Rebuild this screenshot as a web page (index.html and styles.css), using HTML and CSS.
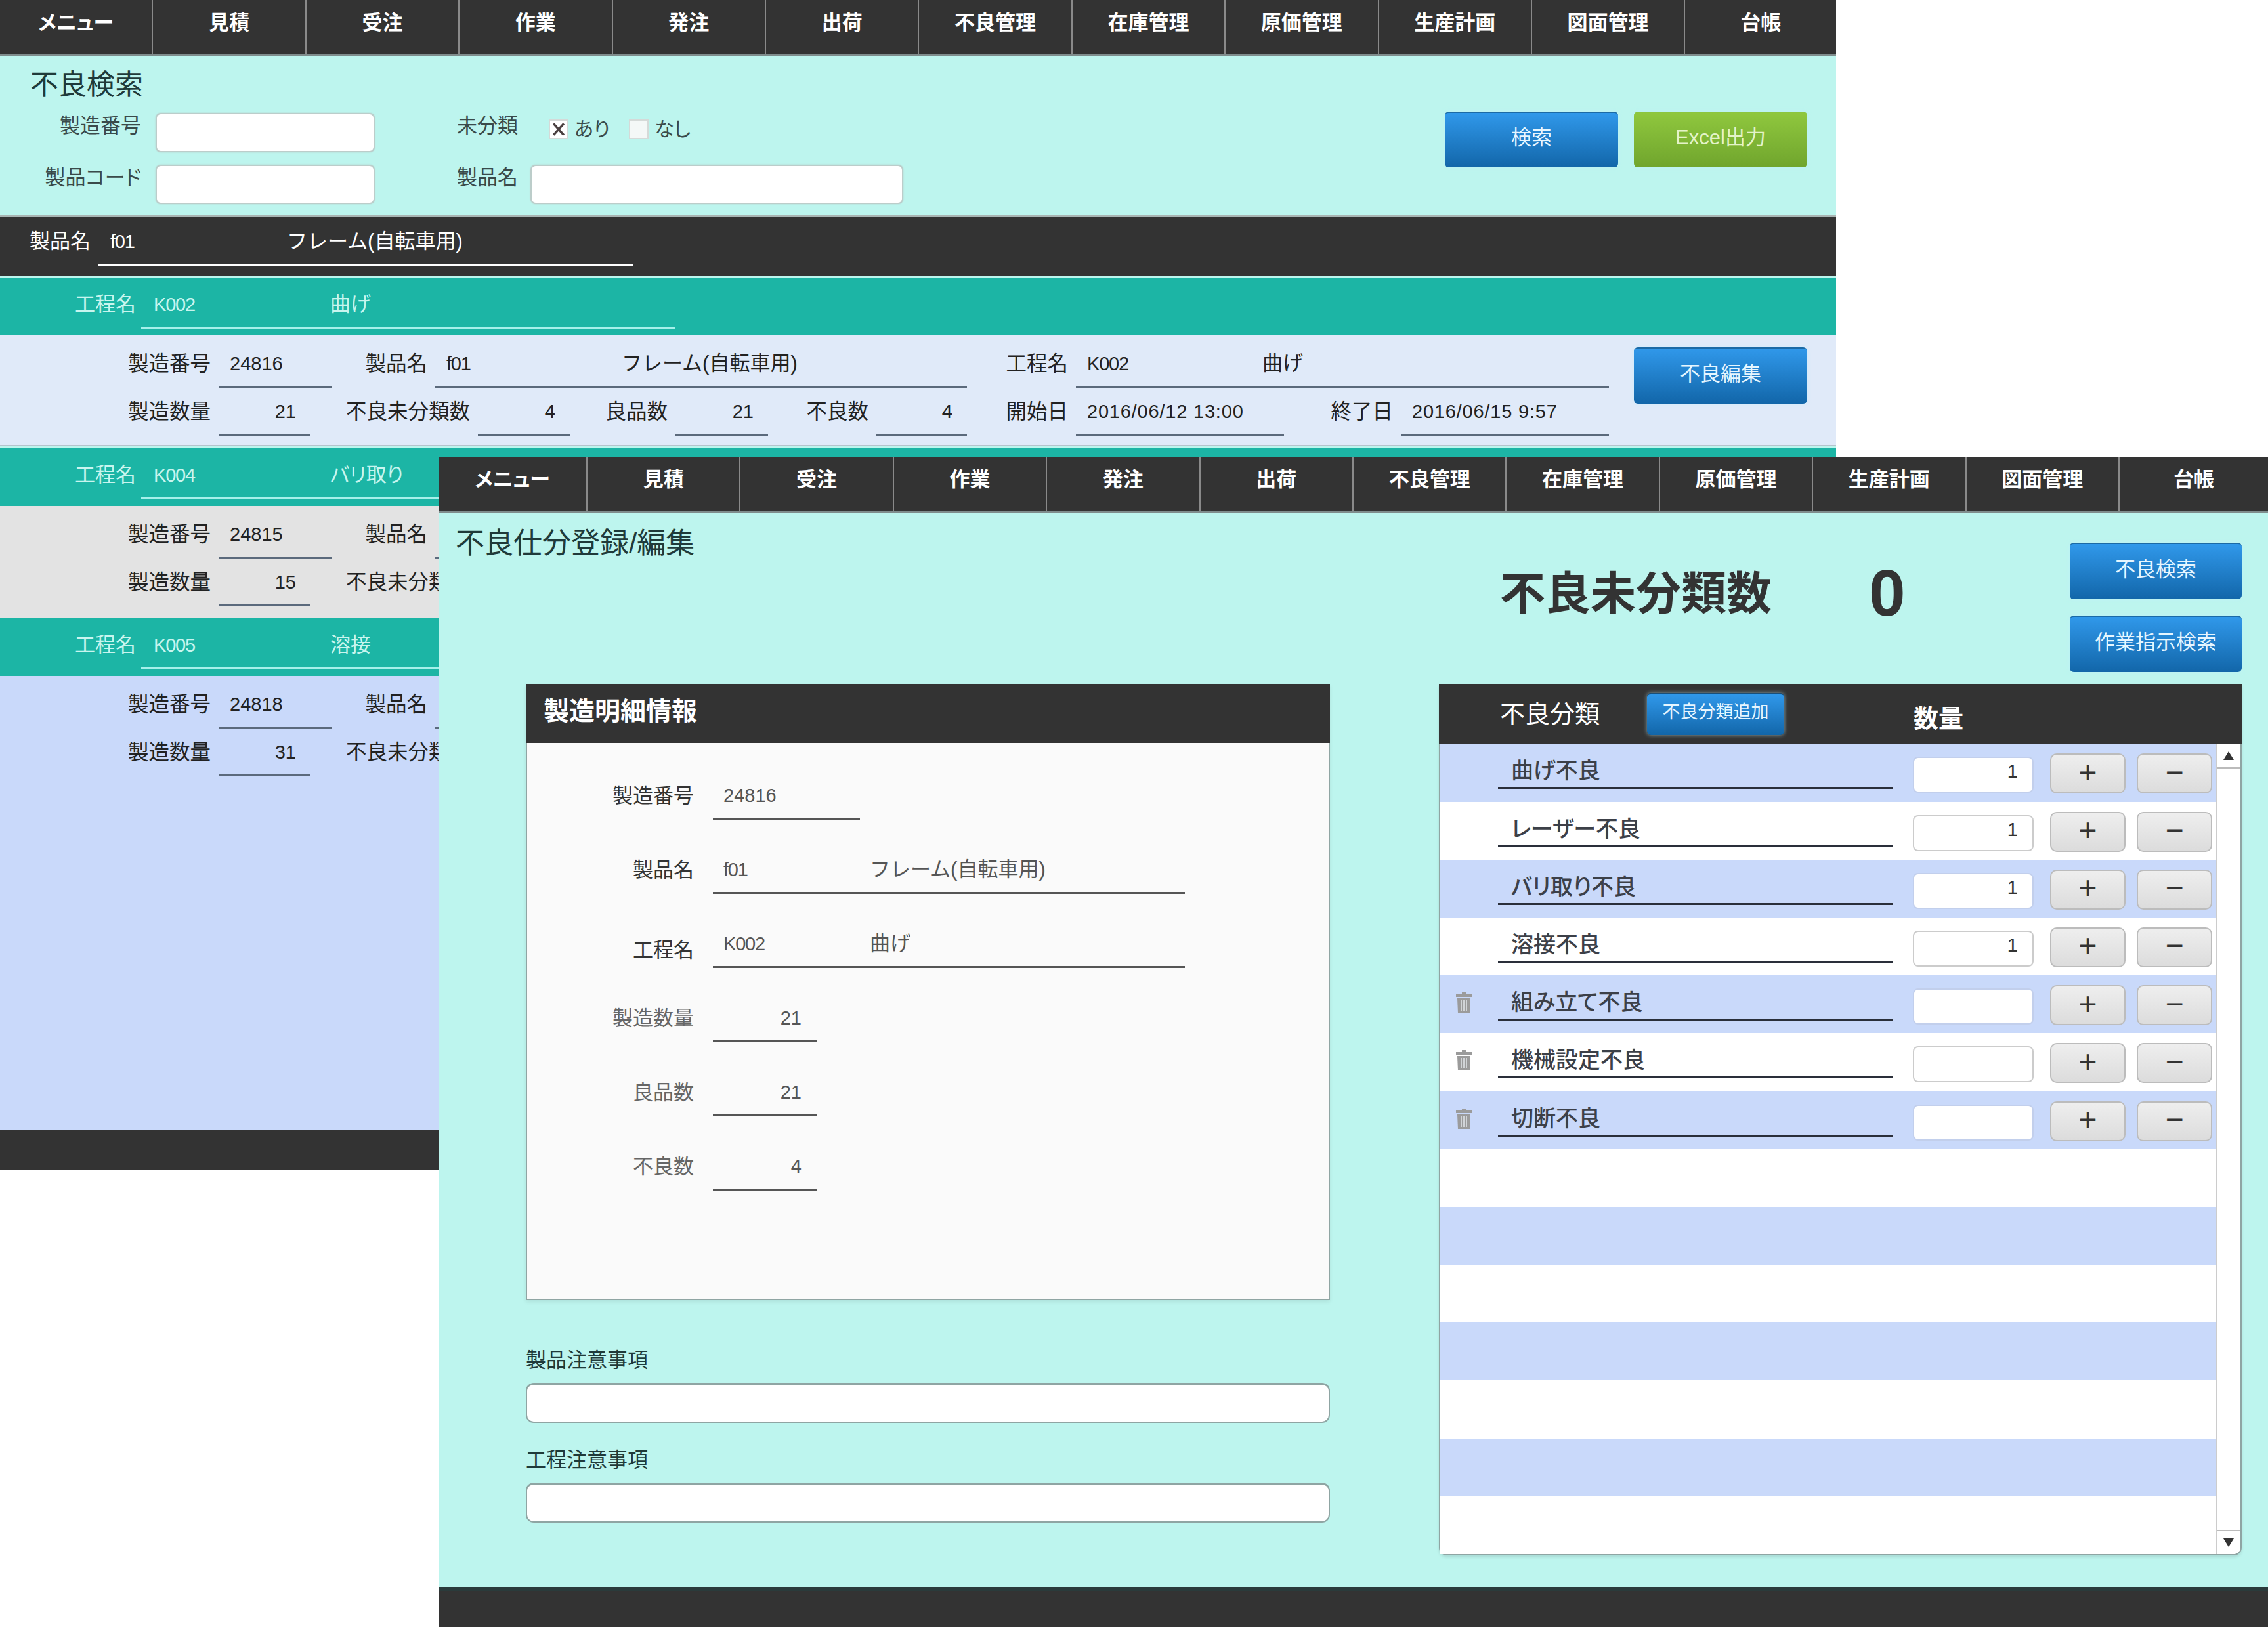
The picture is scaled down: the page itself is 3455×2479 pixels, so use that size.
FILE: index.html
```html
<!DOCTYPE html>
<html lang="ja">
<head>
  <meta charset="utf-8">
  <title>不良仕分登録/編集</title>
  <link rel="stylesheet" href="styles.css">
</head>
<body>
  <!-- 不良検索 window -->
  <section class="window window-back">
    <nav class="menu">
      <a>メニュー</a><a>見積</a><a>受注</a><a>作業</a><a>発注</a><a>出荷</a><a>不良管理</a><a>在庫管理</a><a>原価管理</a><a>生産計画</a><a>図面管理</a><a>台帳</a>
    </nav>

    <div class="search">
      <div class="search-left">
        <h1 class="page-title">不良検索</h1>
        <div class="search-form">
          <label class="search-label">製造番号</label>
          <input class="box" type="text">
          <label class="search-label search-label-2">未分類</label>
          <div class="checks">
            <span class="check"><svg viewBox="0 0 30 30" width="28" height="28"><path d="M6 5l18 20M24 5L6 25" stroke="#4a4040" stroke-width="4"/></svg></span>
            <span class="check-text">あり</span>
            <span class="check check-off"></span>
            <span class="check-text">なし</span>
          </div>
          <label class="search-label">製品コード</label>
          <input class="box" type="text">
          <label class="search-label search-label-2">製品名</label>
          <input class="box" type="text">
        </div>
      </div>
      <div class="search-buttons">
        <button class="btn btn-blue">検索</button>
        <button class="btn btn-green">Excel出力</button>
      </div>
    </div>

    <div class="product-bar">
      <span class="bar-label">製品名</span>
      <span class="bar-value"><span class="code">f01</span><span class="name name-wide">フレーム(自転車用)</span></span>
    </div>

    <div class="process-bar">
      <span class="bar-label">工程名</span>
      <span class="bar-value"><span class="code">K002</span><span class="name">曲げ</span></span>
    </div>
    <div class="detail detail-light">
      <div class="detail-lines">
        <div class="line line-1">
          <span class="lbl">製造番号</span><span class="val">24816</span>
          <span class="lbl">製品名</span><span class="val"><span class="code code-product">f01</span><span class="name name-wide">フレーム(自転車用)</span></span>
          <span class="lbl">工程名</span><span class="val"><span class="code code-product">K002</span><span class="name">曲げ</span></span>
        </div>
        <div class="line line-2">
          <span class="lbl">製造数量</span><span class="val val-num">21</span>
          <span class="lbl">不良未分類数</span><span class="val val-num">4</span>
          <span class="lbl">良品数</span><span class="val val-num">21</span>
          <span class="lbl">不良数</span><span class="val val-num">4</span>
          <span class="lbl">開始日</span><span class="val val-date">2016/06/12 13:00</span>
          <span class="lbl">終了日</span><span class="val val-date">2016/06/15 9:57</span>
        </div>
      </div>
      <button class="btn btn-blue btn-edit">不良編集</button>
    </div>

    <div class="process-bar">
      <span class="bar-label">工程名</span>
      <span class="bar-value"><span class="code">K004</span><span class="name">バリ取り</span></span>
    </div>
    <div class="detail detail-grey">
      <div class="detail-lines">
        <div class="line line-1">
          <span class="lbl">製造番号</span><span class="val">24815</span>
          <span class="lbl">製品名</span><span class="val">&nbsp;</span>
        </div>
        <div class="line line-2">
          <span class="lbl">製造数量</span><span class="val val-num">15</span>
          <span class="lbl">不良未分類数</span>
        </div>
      </div>
    </div>

    <div class="process-bar">
      <span class="bar-label">工程名</span>
      <span class="bar-value"><span class="code">K005</span><span class="name">溶接</span></span>
    </div>
    <div class="detail detail-blue">
      <div class="detail-lines">
        <div class="line line-1">
          <span class="lbl">製造番号</span><span class="val">24818</span>
          <span class="lbl">製品名</span><span class="val">&nbsp;</span>
        </div>
        <div class="line line-2">
          <span class="lbl">製造数量</span><span class="val val-num">31</span>
          <span class="lbl">不良未分類数</span>
        </div>
      </div>
    </div>

    <div class="footer footer-back"></div>
  </section>

  <!-- 不良仕分登録/編集 window -->
  <section class="window window-front">
    <nav class="menu menu-front">
      <a>メニュー</a><a>見積</a><a>受注</a><a>作業</a><a>発注</a><a>出荷</a><a>不良管理</a><a>在庫管理</a><a>原価管理</a><a>生産計画</a><a>図面管理</a><a>台帳</a>
    </nav>

    <div class="front-main">
      <div class="front-top">
        <h1 class="page-title front-title">不良仕分登録/編集</h1>
        <div class="count-label">不良未分類数</div>
        <div class="count-value">0</div>
        <div class="front-buttons">
          <button class="btn btn-blue">不良検索</button>
          <button class="btn btn-blue">作業指示検索</button>
        </div>
      </div>

      <div class="front-cols">
        <div class="info-col">
          <div class="info-panel">
            <div class="info-head">製造明細情報</div>
            <div class="info-body">
              <div class="info-row"><span class="info-label">製造番号</span><span class="info-val w-no">24816</span></div>
              <div class="info-row"><span class="info-label">製品名</span><span class="info-val w-long"><span class="code code-info">f01</span><span class="name name-wide">フレーム(自転車用)</span></span></div>
              <div class="info-row"><span class="info-label info-label-low">工程名</span><span class="info-val w-long"><span class="code code-info">K002</span><span class="name">曲げ</span></span></div>
              <div class="info-row"><span class="info-label info-label-grey">製造数量</span><span class="info-val w-num">21</span></div>
              <div class="info-row"><span class="info-label info-label-grey">良品数</span><span class="info-val w-num">21</span></div>
              <div class="info-row"><span class="info-label info-label-grey">不良数</span><span class="info-val w-num">4</span></div>
            </div>
          </div>
          <div class="note-label note-first">製品注意事項</div>
          <input class="note-box" type="text">
          <div class="note-label">工程注意事項</div>
          <input class="note-box" type="text">
        </div>

        <div class="class-panel">
          <div class="class-head">
            <span class="class-title">不良分類</span>
            <button class="btn btn-blue btn-add">不良分類追加</button>
            <span class="class-qty">数量</span>
          </div>
          <div class="class-body">
            <div class="class-rows">
              <div class="class-row">
                <span class="trash"></span><span class="class-name">曲げ不良</span><input class="qty" type="text" value="1"><button class="step">+</button><button class="step step-minus">−</button>
              </div>
              <div class="class-row">
                <span class="trash"></span><span class="class-name">レーザー不良</span><input class="qty" type="text" value="1"><button class="step">+</button><button class="step step-minus">−</button>
              </div>
              <div class="class-row">
                <span class="trash"></span><span class="class-name">バリ取り不良</span><input class="qty" type="text" value="1"><button class="step">+</button><button class="step step-minus">−</button>
              </div>
              <div class="class-row">
                <span class="trash"></span><span class="class-name">溶接不良</span><input class="qty" type="text" value="1"><button class="step">+</button><button class="step step-minus">−</button>
              </div>
              <div class="class-row">
                <span class="trash"><svg viewBox="0 0 26 31" width="26" height="31"><path d="M10 0h6v3h9v4H1V3h9z" fill="#9b9b9b"/><path d="M3 9h20l-1 22H4z" fill="#9b9b9b"/><path d="M9 12v16M13 12v16M17 12v16" stroke="#dfe3e6" stroke-width="1.6"/></svg></span><span class="class-name">組み立て不良</span><input class="qty" type="text"><button class="step">+</button><button class="step step-minus">−</button>
              </div>
              <div class="class-row">
                <span class="trash"><svg viewBox="0 0 26 31" width="26" height="31"><path d="M10 0h6v3h9v4H1V3h9z" fill="#9b9b9b"/><path d="M3 9h20l-1 22H4z" fill="#9b9b9b"/><path d="M9 12v16M13 12v16M17 12v16" stroke="#dfe3e6" stroke-width="1.6"/></svg></span><span class="class-name">機械設定不良</span><input class="qty" type="text"><button class="step">+</button><button class="step step-minus">−</button>
              </div>
              <div class="class-row">
                <span class="trash"><svg viewBox="0 0 26 31" width="26" height="31"><path d="M10 0h6v3h9v4H1V3h9z" fill="#9b9b9b"/><path d="M3 9h20l-1 22H4z" fill="#9b9b9b"/><path d="M9 12v16M13 12v16M17 12v16" stroke="#dfe3e6" stroke-width="1.6"/></svg></span><span class="class-name">切断不良</span><input class="qty" type="text"><button class="step">+</button><button class="step step-minus">−</button>
              </div>
              <div class="class-row"></div>
              <div class="class-row"></div>
              <div class="class-row"></div>
              <div class="class-row"></div>
              <div class="class-row"></div>
              <div class="class-row"></div>
              <div class="class-row"></div>
            </div>
            <div class="scrollbar">
              <div class="scroll-btn scroll-up"><i class="arrow-up"></i></div>
              <div class="scroll-btn scroll-down"><i class="arrow-down"></i></div>
            </div>
          </div>
        </div>
      </div>
    </div>

    <div class="footer"></div>
  </section>
</body>
</html>
```

FILE: styles.css
```css
* {
  box-sizing: border-box;
}

html,
body {
  margin: 0;
  background: #ffffff;
}

body {
  position: relative;
  width: 3455px;
  height: 2479px;
  overflow: hidden;
  font-family: "Liberation Sans", "Noto Sans CJK JP", sans-serif;
  font-size: 31px;
  line-height: 40px;
  font-feature-settings: "palt";
  color: #222;
}

/* windows */
.window {
  position: absolute;
  display: flex;
  flex-direction: column;
  background: #bdf5ee;
}

.window-back {
  left: 0;
  top: 0;
  width: 2797px;
  height: 1783px;
}

.window-front {
  left: 668px;
  top: 696px;
  width: 2787px;
  height: 1783px;
}

/* menu */
.menu {
  display: grid;
  grid-template-columns: repeat(11, 233.4px) 1fr;
  height: 85px;
  background: #333;
  border-bottom: 3px solid #7f8c8c;
}

.menu-front {
  grid-template-columns: 227px repeat(10, 233.4px) 1fr;
}

.menu a {
  padding-top: 15px;
  text-align: center;
  font-size: 31px;
  font-weight: 700;
  color: #fff;
  border-right: 2px solid #8a8a8a;
}

.menu a:last-child {
  border-right: 0;
}

.page-title {
  margin: 0 0 18px 46px;
  font-size: 43px;
  line-height: 50px;
  font-weight: 400;
  color: #1f3a3a;
}

/* buttons */
.btn {
  display: block;
  padding: 0 0 14px;
  border: 0;
  border-top: 2px solid #1b6aa6;
  border-radius: 6px;
  font-family: inherit;
  font-size: 31px;
  font-weight: 400;
  color: #e6f6ff;
  box-shadow: 0 0 6px rgba(190, 240, 255, 0.6);
}

.btn-blue {
  background: linear-gradient(#3098ea, #1266a9);
}

.btn-green {
  border-top-color: #8cc63f;
  background: linear-gradient(#8fc73e, #70a52d);
  color: #e4f3c8;
}

/* search */
.search {
  display: flex;
  height: 245px;
  padding-top: 19px;
  border-bottom: 2px solid #a9b5b3;
}

.search-left {
  flex: 1;
}

.search-form {
  display: grid;
  grid-template-columns: 237px 334px 237px 568px;
  row-gap: 19px;
}

.search-label {
  text-align: right;
  padding-right: 22px;
  color: #3a4a4a;
}

.search-label-2 {
  padding: 0 0 0 125px;
  text-align: left;
}

.box {
  height: 60px;
  border: 2px solid #bccdca;
  border-radius: 8px;
  background: #fff;
  box-shadow: 0 0 2px #b8c8c6;
}

.checks {
  display: flex;
  align-items: center;
  height: 50px;
  font-size: 30px;
  color: #3a4a4a;
  margin-left: 28px;
}

.check {
  display: flex;
  align-items: center;
  justify-content: center;
  width: 30px;
  height: 30px;
  background: #fff;
  border: 2px solid #d5dad8;
}

.check-off {
  margin-left: 29px;
  background: #f4f8f7;
}

.check-text {
  margin-left: 9px;
}

.search-buttons {
  display: flex;
  gap: 24px;
  padding: 66px 44px 0 0;
}

.search-buttons .btn {
  width: 264px;
  height: 85px;
}

/* bars */
.product-bar,
.process-bar {
  display: flex;
  align-items: flex-start;
}

.product-bar {
  height: 93px;
  padding: 18px 0 0 45px;
  background: #333;
  border-bottom: 3px solid #bdf5ee;
  color: #fff;
}

.process-bar {
  height: 88px;
  padding: 21px 0 0 114px;
  background: #1cb5a5;
  color: #c8f5ef;
}

.bar-label {
  width: 94px;
}

.bar-value {
  display: flex;
  padding: 0 0 15px 19px;
  border-bottom: 3px solid #fff;
}

.product-bar .bar-value {
  width: 815px;
  margin-left: 10px;
}

.process-bar .bar-value {
  width: 814px;
  margin-left: 7px;
  padding-bottom: 14px;
  border-bottom-color: #a5f0ea;
}

.code {
  width: 269px;
  font-size: 29px;
  letter-spacing: -1.2px;
}

.code-product {
  width: 267px;
}

.code-info {
  width: 223px;
}

.name-wide {
  font-feature-settings: normal;
}

/* detail rows */
.detail {
  display: flex;
  align-items: flex-start;
  height: 171px;
  padding-top: 22px;
}

.detail-light {
  height: 172px;
  background: #e0eaf9;
  border-bottom: 4px solid #bdf5ee;
  box-shadow: inset 0 -1px 0 #b5c4cc;
}

.detail-grey {
  background: #e3e3e3;
}

.detail-blue {
  flex: 1;
  background: #c9d9fa;
}

.detail-lines {
  display: flex;
  flex-direction: column;
  gap: 15px;
  width: 2451px;
}

.line {
  display: grid;
  color: #222;
}

.line-1 {
  grid-template-columns: 333px 173px 157px 810px 166px 812px;
}

.line-2 {
  grid-template-columns: 333px 140px 255px 140px 161px 141px 165px 138px 166px 317px 178px 317px;
}

.lbl {
  padding: 1px 12px 0 0;
  text-align: right;
  font-size: 31.5px;
  white-space: nowrap;
}

.val {
  display: flex;
  padding: 1px 0 14px 17px;
  border-bottom: 3px solid #5b6a7c;
  font-size: 29px;
  white-space: nowrap;
}

.val .name {
  font-size: 31px;
}

.val-num {
  justify-content: flex-end;
  padding: 1px 22px 14px 0;
}

.val-date {
  letter-spacing: 0.8px;
}

.btn-edit {
  width: 264px;
  height: 86px;
  margin: -4px 0 0 38px;
}

.footer {
  height: 61px;
  background: #333;
  border-top: 6px solid #2a3b3b;
}

.footer-back {
  border-top: 0;
}

/* front window */
.front-main {
  flex: 1;
  display: flex;
  flex-direction: column;
}

.front-top {
  display: flex;
  height: 261px;
  padding-left: 26px;
}

.front-title {
  width: 1591px;
  margin: 22px 0 0;
  font-size: 44px;
}

.count-label {
  width: 414px;
  margin-top: 75px;
  font-size: 69px;
  line-height: 100px;
  font-weight: 700;
  color: #333;
  white-space: nowrap;
}

.count-value {
  width: 54px;
  margin: 72px 252px 0 148px;
  font-size: 100px;
  line-height: 100px;
  font-weight: 700;
  color: #333;
}

.front-buttons {
  display: flex;
  flex-direction: column;
  gap: 25px;
  width: 262px;
  padding-top: 46px;
}

.front-buttons .btn {
  height: 86px;
}

.front-cols {
  display: flex;
  padding-left: 133px;
}

.info-col {
  width: 1225px;
}

.info-panel {
  height: 939px;
  display: flex;
  flex-direction: column;
  background: #fafafa;
  border: 2px solid #8fa5a3;
  border-top: 0;
  box-shadow: 0 3px 6px rgba(0, 0, 0, 0.08);
}

.info-head {
  height: 90px;
  margin: 0 -2px;
  padding: 21px 0 0 27px;
  background: #333;
  color: #fff;
  font-size: 39px;
  line-height: 42px;
  font-weight: 700;
}

.info-body {
  display: flex;
  flex-direction: column;
  gap: 56px;
  padding-top: 60px;
}

.info-row {
  display: flex;
  align-items: flex-start;
}

.info-label {
  width: 254px;
  margin-right: 29px;
  padding-top: 1px;
  text-align: right;
  color: #333;
}

.info-label-low {
  margin-top: 9px;
}

.info-label-grey {
  color: #666;
}

.info-val {
  display: flex;
  padding: 0 0 14px 16px;
  border-bottom: 3px solid #555;
  font-size: 29px;
  color: #555;
}

.info-val .name {
  font-size: 31px;
}

.w-no {
  width: 224px;
}

.w-long {
  width: 719px;
}

.w-num {
  width: 159px;
  justify-content: flex-end;
  padding: 0 24px 14px 0;
}

.note-label {
  margin: 37px 0 14px;
  color: #1f3a3a;
}

.note-first {
  margin-top: 72px;
}

.note-box {
  display: block;
  width: 100%;
  height: 61px;
  background: #fff;
  border: 2px solid #8fa5a3;
  border-top-width: 3px;
  border-radius: 12px;
}

.class-panel {
  display: flex;
  flex-direction: column;
  width: 1223px;
  height: 1328px;
  margin-left: 166px;
  background: #fff;
  border: 2px solid #8fa5a3;
  border-top: 0;
  border-radius: 0 0 12px 12px;
  box-shadow: 0 3px 4px rgba(0, 0, 0, 0.1);
}

.class-head {
  display: flex;
  align-items: flex-start;
  height: 93px;
  margin: 0 -2px;
  padding-left: 93px;
  background: #333;
  color: #fff;
  font-size: 38px;
}

.class-title {
  width: 154px;
  margin-top: 26px;
}

.btn-add {
  width: 209px;
  height: 64px;
  margin: 14px 0 0 70px;
  font-size: 27px;
  border-top-color: #1a4f78;
}

.class-qty {
  margin: 33px 0 0 197px;
  font-weight: 700;
}

.class-body {
  flex: 1;
  display: flex;
}

.class-rows {
  flex: 1;
}

.class-row {
  display: flex;
  align-items: flex-start;
  height: 88.2px;
  background: #fff;
}

.class-row:nth-child(odd) {
  background: #c9d9fa;
}

.trash {
  display: flex;
  width: 88px;
  padding: 26px 0 0 23px;
}

.class-name {
  width: 601px;
  margin-top: 21px;
  padding: 0 0 5px 20px;
  border-bottom: 3px solid #2a2f3a;
  font-size: 34px;
  font-weight: 500;
  color: #3c4048;
}

.qty {
  width: 184px;
  height: 55px;
  margin: 20px 25px 0 31px;
  padding: 0 22px 10px 0;
  background: #fff;
  border: 2px solid #ccc;
  border-radius: 8px;
  font-family: inherit;
  font-size: 29px;
  text-align: right;
  color: #333;
}

.class-row:nth-child(odd) .qty {
  border-color: #c2cfec;
}

.step {
  width: 115px;
  height: 61px;
  margin-top: 15px;
  padding: 0 0 4px;
  background: linear-gradient(#eeeeee, #dcdcdc);
  border: 2px solid #bcbcbc;
  border-radius: 10px;
  font-family: inherit;
  font-size: 48px;
  line-height: 50px;
  color: #333;
}

.step-minus {
  margin-left: 17px;
}

.scrollbar {
  display: flex;
  flex-direction: column;
  justify-content: space-between;
  width: 37px;
  background: #fff;
  border-left: 1px solid #ccc;
  border-radius: 0 0 10px 0;
}

.scroll-btn {
  display: flex;
  justify-content: center;
  align-items: center;
}

.scroll-up {
  height: 38px;
  border-bottom: 2px solid #bbb;
}

.scroll-down {
  height: 37px;
  border-top: 2px solid #bbb;
}

.arrow-up {
  border: 8px solid transparent;
  border-top: 0;
  border-bottom: 13px solid #333;
}

.arrow-down {
  border: 8px solid transparent;
  border-bottom: 0;
  border-top: 13px solid #333;
}
```
